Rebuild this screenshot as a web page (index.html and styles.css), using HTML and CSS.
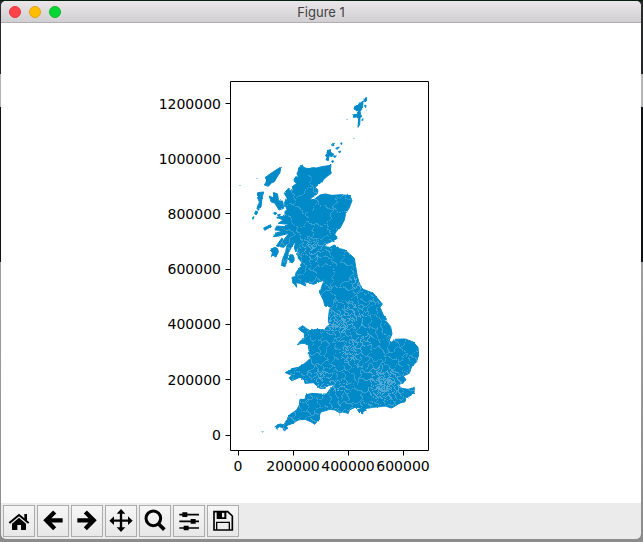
FILE: index.html
```
<!DOCTYPE html>
<html lang="en">
<head>
  <meta charset="UTF-8" />
  <title>Figure 1</title>
  <link rel="stylesheet" href="styles.css">
</head>
<body>

  <div class="window">
    <header class="titlebar">
      <div class="lights">
        <button class="light close" aria-label="Close"></button>
        <button class="light minimize" aria-label="Minimize"></button>
        <button class="light zoom" aria-label="Zoom"></button>
      </div>
      <h1>Figure 1</h1>
    </header>

    <main>
      <svg class="figure" viewBox="1 23 640 480" role="img" aria-label="Map of Great Britain">
        <defs>
          <filter id="rough" x="-5%" y="-5%" width="110%" height="110%" color-interpolation-filters="sRGB">
            <feTurbulence type="fractalNoise" baseFrequency="0.08" numOctaves="2" seed="4" />
            <feDisplacementMap in="SourceGraphic" scale="7" xChannelSelector="R" yChannelSelector="G" />
          </filter>
        </defs>

        <!-- land, drawn at three units to the pixel -->
        <g class="land" transform="translate(225 160) scale(0.33333)" filter="url(#rough)">
          <path id="mainland" d="M222 22 232 18 240 24 252 26 262 23 275 24 290 20 318 16 316 30 319 40 305 50 295 60 283 72 270 82 280 90 276 102 262 112 252 120 268 118 285 105 300 102 320 106 350 104 375 107 381 122 372 145 362 160 358 180 345 205 335 212 328 225 337 235 325 242 308 250 300 260 315 262 328 255 345 266 360 270 375 283 388 295 392 320 397 350 407 380 415 388 445 400 460 418 472 432 465 442 475 465 487 480 475 478 465 475 485 485 497 500 501 522 493 540 497 550 507 538 540 537 565 546 579 562 581 582 575 605 560 620 553 640 535 648 543 660 530 670 520 675 530 685 550 688 568 682 567 700 543 715 540 725 520 732 500 744 480 738 445 742 420 746 390 742 373 750 370 760 353 756 343 758 330 750 315 748 295 754 285 760 282 775 270 793 257 785 240 778 220 780 203 790 190 795 183 800 185 807 178 813 173 803 163 800 153 808 150 800 165 792 177 794 185 780 193 765 215 750 223 735 225 718 240 718 243 705 260 700 285 702 305 702 313 690 330 673 315 676 300 685 285 685 275 677 265 668 240 670 238 660 225 652 210 658 200 662 193 655 200 646 181 638 200 626 220 622 240 610 253 598 253 575 250 560 240 550 230 550 217 554 227 542 238 535 238 520 227 512 220 506 233 497 245 506 255 512 275 508 300 510 305 500 313 495 310 480 313 450 317 442 300 438 295 420 285 400 290 380 298 360 285 365 265 373 243 365 241 378 225 370 213 368 215 382 203 365 201 352 211 350 213 338 225 322 230 307 220 295 218 278 222 250 213 276 208 265 212 242 199 262 190 280 185 305 180 320 170 318 172 300 182 275 188 248 177 262 165 260 176 240 192 220 160 228 145 230 155 218 178 212 150 210 155 198 178 200 192 193 160 190 175 180 155 172 180 168 180 155 186 148 178 130 185 112 178 100 190 85 205 92 202 80 215 70 205 62 212 50 222 52 216 42Z" />
          <!-- Skye, the Hebrides, Islay, Jura, Mull and Arran -->
          <path d="M133 108 145 114 147 98 158 102 160 122 173 124 176 145 162 150 150 130 138 125Z" />
          <path d="M166 22 166 36 158 48 148 65 140 68 130 79 118 75 124 65 120 53 135 42 150 32Z" />
          <path d="M98 98 116 96 112 110 110 125 108 140 100 151 96 145 103 125 97 112ZM92 153 98 155 95 164 89 162ZM83 172 87 170 84 178Z" />
          <path d="M116 204 138 194 141 198 119 211ZM147 157 155 159 152 164 147 162ZM157 165 166 163 163 170Z" />
          <path d="M136 268 150 262 158 266 160 276 153 291 144 286 140 288 142 278ZM154 258 170 235 174 237 162 260Z" />
          <path d="M195 284 204 285 208 300 202 309 195 305 192 295Z" />
          <!-- Orkney -->
          <path d="M305 -28 317 -31 318 -22 326 -18 321 -10 312 -13 310 2 303 -1 306 -8 301 -14 307 -18ZM320 -47 325 -50 327 -44 322 -42ZM332 -35 343 -39 337 -32ZM347 -50 351 -52 349 -46ZM325 -12 334 -12 329 -7ZM341 -25 347 -27 344 -21ZM319 2 326 3 323 8Z" />
          <!-- Shetland -->
          <path d="M417 -185 425 -187 424 -177 418 -174ZM407 -172 415 -177 413 -165 406 -162ZM391 -164 402 -168 413 -163 412 -153 405 -147 407 -136 410 -131 405 -125 404 -106 399 -98 401 -124 395 -129 385 -128 386 -136 399 -138 396 -148 387 -153ZM418 -164 423 -164 422 -157ZM411 -123 416 -123 413 -118Z" />
          <!-- Isle of Wight -->
          <path d="M397 750 412 744 424 750 412 762Z" />
        </g>
        <g class="islet">
          <path d="M239 185h2v1h-2zM256 178h2v1h-2zM346 119h2v1h-2zM353 138h2v1h-2zM366 110h1v1h-1zM261 431h3v1h-3zM262 432h1v1h-1zM296 394h1v1h-1zM339 413h1v3h-1z" />
        </g>

        <!-- constituency borders, filled in by map.js -->
        <clipPath id="borders-clip">
          <use href="#mainland" transform="translate(225 160) scale(0.33333)" />
        </clipPath>
        <g clip-path="url(#borders-clip)">
          <path id="borders" />
          <path id="city-borders" />
        </g>

        <path class="axes" d="M230.500 81.500H428.500V450.500H230.500Z" />
        <path class="axes" d="M225.500 103.500h5M225.500 158.500h5M225.500 213.500h5M225.500 269.500h5M225.500 324.500h5M225.500 379.500h5M225.500 435.500h5" />
        <path class="axes" d="M238.500 450.500v5M293.500 450.500v5M348.500 450.500v5M403.500 450.500v5" />

        <g class="y-labels">
          <text x="221" y="109">1200000</text>
          <text x="221" y="164">1000000</text>
          <text x="221" y="219">800000</text>
          <text x="221" y="274">600000</text>
          <text x="221" y="329">400000</text>
          <text x="221" y="385">200000</text>
          <text x="221" y="440">0</text>
        </g>
        <g class="x-labels">
          <text x="238" y="471">0</text>
          <text x="293" y="471">200000</text>
          <text x="348" y="471">400000</text>
          <text x="403" y="471">600000</text>
        </g>
      </svg>
    </main>

    <div class="toolbar" role="toolbar" aria-label="Plot tools">
      <button class="tool" aria-label="Home">
        <svg viewBox="3 3 90 90">
          <path d="M27 56 48 38 69 56V75H54V60H43V75H27Z" />
          <path d="M64 27H72V48L64 41Z" />
          <path class="line" d="M19 54 48 30 77 54" stroke-width="6" />
        </svg>
      </button>
      <button class="tool" aria-label="Back">
        <svg viewBox="3 3 90 90">
          <path class="line" d="M53 21 28 46 53 71M28 46H77" stroke-width="13" />
        </svg>
      </button>
      <button class="tool" aria-label="Forward">
        <svg viewBox="3 3 90 90">
          <path class="line" d="M43 21 68 46 43 71M68 46H19" stroke-width="13" />
        </svg>
      </button>
      <button class="tool" aria-label="Pan">
        <svg viewBox="3 3 90 90">
          <path class="line" d="M48 22V71M24 47H73" stroke-width="7" />
          <path d="M48 12 61 26H35ZM48 81 61 67H35ZM13 47 27 34V60ZM83 47 69 34V60Z" />
        </svg>
      </button>
      <button class="tool" aria-label="Zoom to rectangle">
        <svg viewBox="3 3 90 90">
          <circle class="line" cx="43" cy="40" r="22" stroke-width="9" />
          <path class="line" d="M59 57 76 74" stroke-width="11" />
        </svg>
      </button>
      <button class="tool" aria-label="Configure subplots">
        <svg viewBox="3 3 90 90">
          <path class="line" d="M19 29H78M19 49H78M19 69H78" stroke-width="5" />
          <path d="M28 22H43V36H28ZM53 42H68V56H53ZM32 62H47V76H32Z" />
        </svg>
      </button>
      <button class="tool" aria-label="Save">
        <svg viewBox="3 3 90 90">
          <path class="line" d="M21 20H62L76 33V75H21Z" stroke-width="5" />
          <path d="M29 18H58V42H29ZM45 23V37H52V23Z" fill-rule="evenodd" />
          <path class="line" d="M29 74V52H67V74" stroke-width="4" />
        </svg>
      </button>
    </div>
  </div>

  <script src="map.js"></script>
</body>
</html>
```

FILE: styles.css
```
* {
  box-sizing: border-box;
}

body {
  margin: 0;
  padding: 1px 2px 3px 1px;
  min-height: 100vh;
  font-family: "DejaVu Sans", sans-serif;
  background: linear-gradient(#03200f 1px, #2a2c2e 1px, #222427 74px, #b4b4b4 74px, #b4b4b4 107px, #101113 107px, #101113 262px, #a0a0a0 262px, #8c8c8c);
}

.window {
  background: #ebebeb;
  border-radius: 5px;
  overflow: hidden;
}

.titlebar {
  position: relative;
  display: flex;
  align-items: center;
  justify-content: center;
  height: 22px;
  background: linear-gradient(#eae6ea, #d1cfd1);
  border-bottom: 1px solid #b0aeb0;
}

.titlebar h1 {
  margin: 0;
  font-family: Inter, sans-serif;
  font-size: 13px;
  font-weight: 400;
  color: #434143;
}

.lights {
  position: absolute;
  left: 8px;
  display: flex;
  gap: 8px;
}

.light {
  width: 12px;
  height: 12px;
  padding: 0;
  border: 1px solid;
  border-radius: 50%;
}

.close {
  background: #ff4249;
  border-color: #e5333d;
}

.minimize {
  background: #ffbd00;
  border-color: #e3a116;
}

.zoom {
  background: #00d732;
  border-color: #0fb62c;
}

main {
  background: white;
}

.figure {
  display: block;
  width: 100%;
}

.land {
  fill: #008ac8;
  stroke: #008ac8;
  stroke-width: 3px;
}

.islet {
  fill: #a5d3ea;
}

#borders {
  fill: #3ba1d3;
  shape-rendering: crispEdges;
}

#city-borders {
  fill: #4ea9d7;
  shape-rendering: crispEdges;
}

.axes {
  fill: none;
  stroke: black;
  stroke-width: 1px;
}

.figure text {
  font-size: 14px;
}

.y-labels {
  text-anchor: end;
}

.x-labels {
  text-anchor: middle;
}

.toolbar {
  display: flex;
  gap: 2px;
  padding: 2px;
}

.tool {
  width: 32px;
  height: 32px;
  padding: 0;
  background: linear-gradient(#f6f6f6, #e8e8e8);
  border: 1px solid #adadad;
}

.tool svg {
  display: block;
  width: 30px;
  height: 30px;
}

.line {
  fill: none;
  stroke: black;
}
```

FILE: map.js
```
// x, y, spread and number of seats round each big city
const cities = [
  [383, 384, 6, 60],
  [382, 383, 14, 24],
  [349, 354, 7, 24],
  [341, 322, 8, 26],
  [355, 315, 9, 20],
  [332, 323, 6, 10],
  [312, 251, 8, 24],
  [356, 282, 5, 10],
  [323, 380, 7, 12],
  [362, 340, 8, 8],
  [340, 387, 6, 6]
];

let seed = 7;
function random() {
  seed = (seed * 16807) % 2147483647;
  return seed / 2147483647;
}

const seats = [];
for (const [x, y, spread, count] of cities) {
  for (let i = 0; i < count; i++) {
    const angle = random() * Math.PI * 2;
    const distance = spread * Math.sqrt(random()) * 1.5;
    seats.push([x + Math.cos(angle) * distance, y + Math.sin(angle) * distance]);
  }
}

// the rest of the country: large seats in the north, smaller ones in the south
for (let y = 170; y < 440; y += y < 300 ? 18 : 12) {
  const step = y < 300 ? 20 : 13;
  for (let x = 270; x < 425; x += step) {
    seats.push([x + random() * step, y + random() * step]);
  }
}

function nearest(x, y) {
  let best = 0;
  let bestDistance = Infinity;
  for (let i = 0; i < seats.length; i++) {
    const dx = seats[i][0] - x;
    const dy = seats[i][1] - y;
    const distance = dx * dx + dy * dy;
    if (distance < bestDistance) {
      bestDistance = distance;
      best = i;
    }
  }
  return best;
}

// bend the borders a little so they are not straight lines
function seatAt(x, y) {
  return nearest(x + Math.sin(y * 0.8) * 1.2, y + Math.sin(x * 0.7) * 1.2);
}

function isCity(x, y) {
  return cities.some(([cx, cy, spread]) => Math.hypot(cx - x, cy - y) < spread * 1.3);
}

let country = "";
let city = "";
for (let y = 175; y < 432; y++) {
  for (let x = 275; x < 422; x++) {
    const seat = seatAt(x, y);
    if (seat !== seatAt(x + 1, y) || seat !== seatAt(x, y + 1)) {
      if (random() < 0.75) {
        const pixel = `M${x} ${y}h1v1h-1z`;
        if (isCity(x, y)) {
          city += pixel;
        } else {
          country += pixel;
        }
      }
    }
  }
}
document.getElementById("borders").setAttribute("d", country);
document.getElementById("city-borders").setAttribute("d", city);
```
